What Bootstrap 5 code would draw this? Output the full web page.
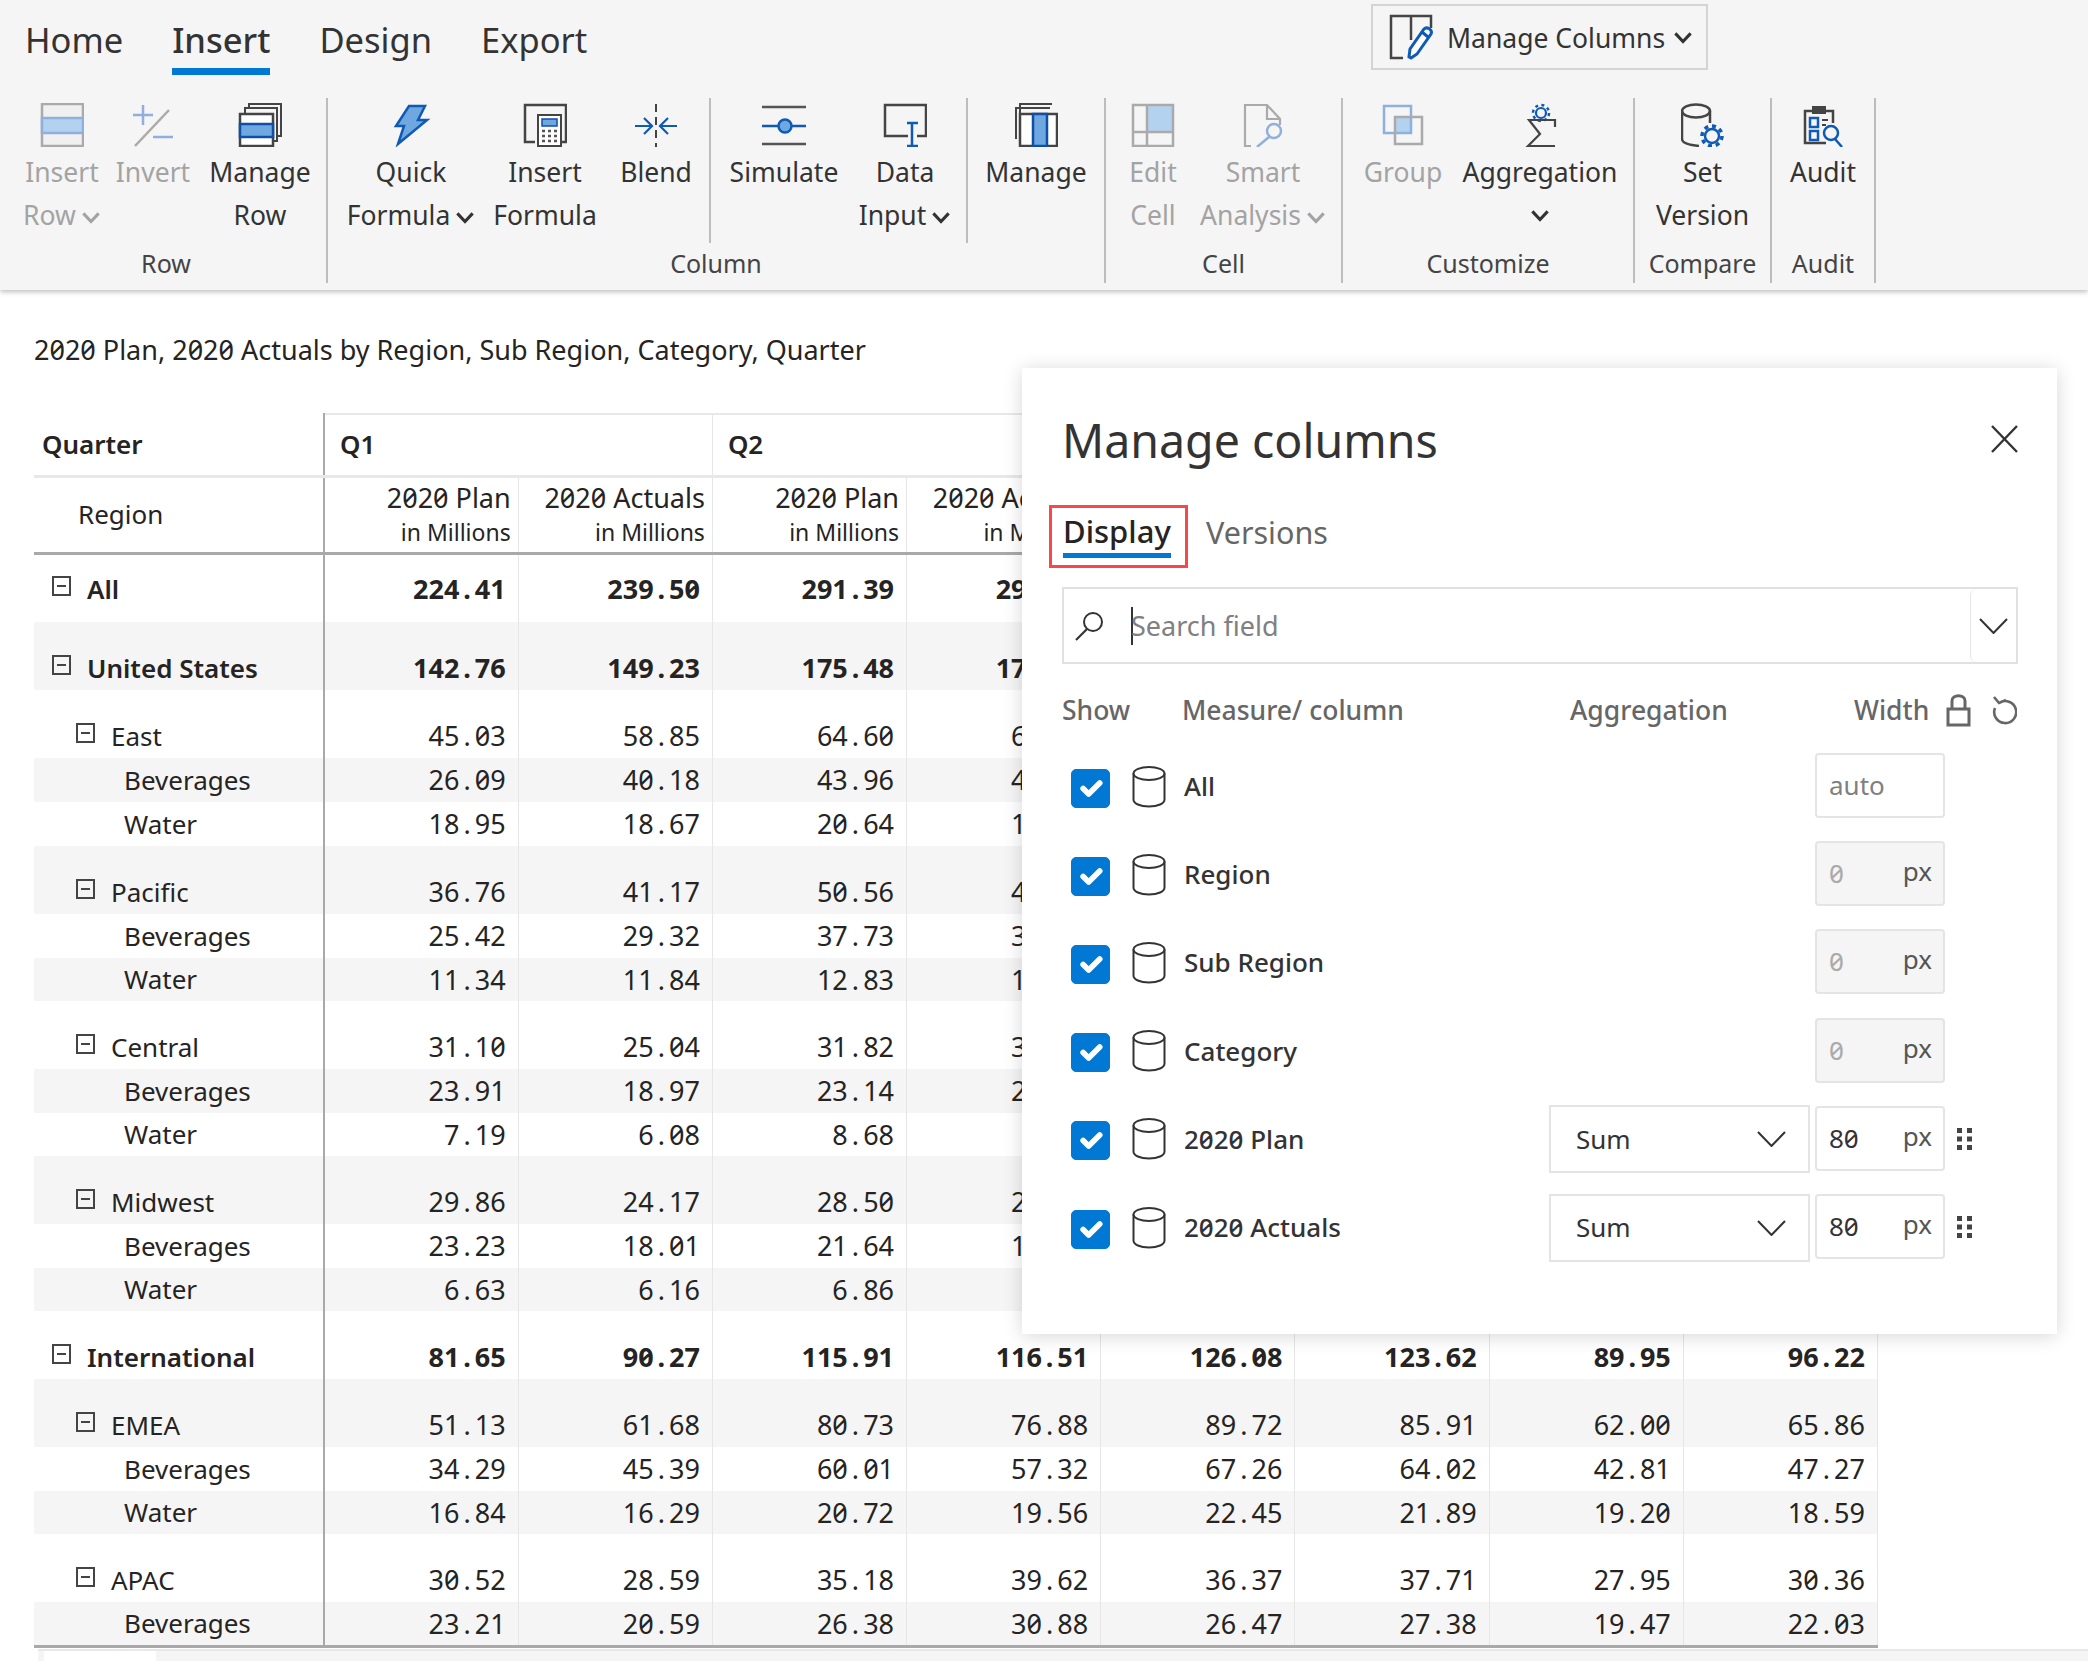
<!DOCTYPE html>
<html lang="en">
<head>
    <meta charset="UTF-8">
    <meta name="viewport" content="width=device-width, initial-scale=1.0">
    <title>Manage columns</title>
    <link href="https://cdn.jsdelivr.net/npm/bootstrap@5.3.0/dist/css/bootstrap.min.css" rel="stylesheet">
    <style>
        body {
            width: 2088px;
            height: 1661px;
            overflow: hidden;
            position: relative;
            background: #fff;
            color: #252423;
            font-family: "Noto Sans", sans-serif;
            font-size: 26px;
            font-feature-settings: "zero";
        }

        /* ribbon */
        .ribbon {
            height: 290px;
            background: #f5f5f5;
            box-shadow: 0 2px 5px rgba(0, 0, 0, .25);
        }

        .tab-row { height: 98px; }
        .tab-list { width: 1371px; padding-left: 25px; gap: 49px; }

        .tab-link {
            font-size: 34.5px;
            line-height: 48px;
            height: 75px;
            padding-top: 16px;
            color: #333;
        }

        .tab-on { font-weight: 500; border-bottom: 7px solid #0078d4; }

        .manage-btn {
            width: 337px;
            height: 66px;
            margin-top: 4px;
            border: 2px solid #d4d4d4;
            padding-left: 16px;
            font-size: 26.5px;
            color: #333;
        }

        .manage-btn span { padding-top: 3px; }
        .manage-btn svg.big { width: 46px; height: 46px; margin-right: 12px; }

        .rb-group { height: 185px; border-right: 2px solid #bdbdbd; flex: none; }
        .rb-sub { height: 145px; }
        .rb-sep { border-right: 2px solid #bdbdbd; }
        .rb-title { height: 40px; line-height: 40px; color: #444; text-align: center; font-size: 25px; }

        .rb-item {
            padding-top: 5px;
            line-height: 43.5px;
            font-size: 26.5px;
            white-space: nowrap;
            color: #333;
        }

        .rb-item.off { color: #a3a3a3; }
        .rb-icon { width: 44px; height: 44px; margin-bottom: 3.5px; flex: none; }
        .chev { width: 20px; height: 13px; margin-left: 5px; }
        .chev-line { height: 43.5px; }

        .g-row { width: 328px; }
        .g-row .rb-sub { padding-left: 20px; }
        .g-row .rb-title { padding-left: 6px; }
        .g-col { width: 778px; }
        .g-cell { width: 237px; }
        .g-cust { width: 292px; }
        .g-comp { width: 137px; }
        .g-audit { width: 104px; }

        .sub-a { width: 383px; padding-left: 23px; flex: none; }
        .sub-b { width: 257px; padding-left: 13px; flex: none; }
        .sub-c { width: 136px; flex: none; }

        .w84 { width: 84px; }
        .w98 { width: 98px; }
        .w116 { width: 116px; }
        .w120 { width: 120px; }
        .w148 { width: 148px; }
        .w74 { width: 74px; }
        .w122 { width: 122px; }
        .w94 { width: 94px; }
        .w126 { width: 126px; }
        .w154 { width: 154px; }
        .wfull { width: 100%; }

        /* report */
        .report-title { padding: 40px 0 0 34px; line-height: 40px; height: 123px; font-size: 27px; }

        .grid-wrap { margin-left: 34px; width: 1844px; }

        .report-grid { table-layout: fixed; width: 1844px; border-collapse: collapse; margin: 0; }
        .report-grid td, .report-grid th { padding: 0; border: 0; font-weight: 400; }
        .report-grid th.first { width: 290px; }
        .report-grid td:first-child, .report-grid th.first { border-right: 2px solid #a9a9a9; }
        .report-grid td { border-right: 1px solid #e6e6e6; vertical-align: bottom; line-height: 44px; }
        .report-grid tr.alt td { background: #f5f5f5; }
        .report-grid tr.bold td { font-weight: 600; }
        .report-grid tr.bold td.num { font-weight: 700; }

        .head-q th { height: 62px; border-top: 2px solid #e8e8e8 !important; border-bottom: 3px solid #e8e8e8 !important; font-weight: 600 !important; vertical-align: middle; }
        .head-q th.first { border-top: 0 !important; padding-left: 8px; }
        .head-q th.q { padding-left: 15px; border-right: 1px solid #e6e6e6; }
        .head-m th { height: 77px; border-bottom: 3px solid #a9a9a9 !important; vertical-align: middle; }
        .head-m th.first { padding-left: 44px; }
        .head-m th.m { text-align: right; padding-right: 7px; line-height: 34px; font-size: 27px; border-right: 1px solid #e6e6e6; }
        .head-m .sub-line { font-size: 23px; display: block; }

        .report-grid .h69 td { height: 69px; padding-bottom: 11px; }
        .report-grid .h68 td { height: 68px; }
        .report-grid .h44 td { height: 44px; }
        .report-grid .h43 td { height: 43px; line-height: 43px; }

        .num { text-align: right; padding-right: 12px !important; font-size: 27px; }
        .num-dot { display: inline-block; width: 15.4px; text-align: center; }
        .lv0 { padding-left: 18px !important; }
        .lv1 { padding-left: 42px !important; }
        .lv2 { padding-left: 90px !important; }

        .tree-box {
            display: inline-block;
            width: 19px;
            height: 20px;
            border: 2px solid #444;
            margin-right: 16px;
            position: relative;
            top: -3px;
            flex: none;
        }

        .tree-box::after {
            content: "";
            position: absolute;
            left: 3px;
            right: 3px;
            top: 7px;
            height: 2px;
            background: #444;
        }

        .grid-end { border-bottom: 3px solid #a9a9a9; }

        .scroll-bar {
            margin: 1px 0 0 38px;
            height: 14px;
            background: #f5f5f5;
            border-top: 2px solid #e8e8e8;
        }

        .scroll-thumb { width: 112px; height: 12px; margin-left: 6px; background: #fff; }

        /* panel */
        .side-panel {
            position: absolute;
            left: 1022px;
            top: 368px;
            width: 1035px;
            height: 966px;
            background: #fff;
            padding: 42px 39px 0 40px;
            box-shadow: 0 2px 18px rgba(0, 0, 0, .16);
        }

        .panel-title { font-size: 46.5px; line-height: 60px; color: #333; }
        .panel-x { width: 27px; height: 28px; margin-top: 15px; }

        .panel-tabs { margin: 35px 0 0 -13px; height: 63px; }
        .tab-box { width: 139px; height: 63px; border: 3px solid #f44a4f; padding-left: 11px; }

        .tab-name {
            font-size: 31px;
            font-weight: 500;
            line-height: 44px;
            height: 50px;
            padding-top: 1px;
            width: 108px;
            border-bottom: 5px solid #0078d4;
        }

        .tab-other { font-size: 30.5px; line-height: 44px; margin: -9px 0 0 18px; color: #666; }

        .search-box {
            margin-top: 19px;
            height: 77px;
            border: 2px solid #e1e1e1;
            border-radius: 0;
            padding: 0;
            font-size: 27px;
        }

        .search-glass { width: 30px; height: 30px; margin: 0 27px 0 10px; flex: none; }
        .search-caret { width: 2px; height: 38px; background: #333; flex: none; }
        .search-text { color: #808080; line-height: 38px; margin-left: -2px; }
        .search-drop { width: 46px; border-left: 1px solid #e6e6e6; border-radius: 6px; flex: none; }
        .chev-thin { width: 29px; height: 16px; flex: none; }

        .col-head { height: 40px; margin: 26px 0 14px; color: #666; font-weight: 500; line-height: 40px; font-size: 26.5px; }
        .ch-show { width: 120px; }
        .ch-measure { width: 388px; }
        .ch-agg { width: 284px; }
        .head-lock { width: 25px; height: 34px; margin: 0 20px 0 17px; }
        .head-undo { width: 26px; height: 30px; }

        .col-row { height: 88.2px; }

        .side-panel .form-check-input.col-check {
            width: 39px;
            height: 39px;
            margin: 0 22px 0 9px;
            background-color: #0078d4;
            border-color: #0078d4;
            border-radius: 5px;
            flex: none;
        }

        .col-cyl { width: 34px; height: 43px; margin: -4px 18px 0 0; flex: none; }
        .col-name { flex: 1 1 auto; color: #333; font-weight: 500; margin-top: -3px; }
        .agg-slot { width: 261px; margin: -3px 5px 0 0; flex: none; }

        .agg-select {
            height: 68px;
            border: 2px solid #e4e4e4;
            border-radius: 0;
            padding: 0 22px 0 25px;
            color: #333;
            font-size: 26px;
        }

        .width-box {
            width: 130px;
            height: 65px;
            flex: none;
            margin-top: -5px;
            border: 2px solid #e4e4e4;
            border-radius: 4px;
            padding: 0 11px 0 12px;
            color: #333;
            font-size: 26px;
        }

        .width-box.off { background: #f5f5f5; }
        .width-box.off .val { color: #aaa; }
        .width-box.auto { color: #808080; }
        .unit { color: #555; margin-top: -4px; }
        .grip { width: 15px; height: 22px; margin: -4px 46px 0 12px; flex: none; }
    </style>
</head>
<body>
<!-- Ribbon -->
<header class="ribbon">
    <div class="tab-row d-flex">
        <div class="tab-list d-flex">
            <div class="tab-link">Home</div>
            <div class="tab-link tab-on">Insert</div>
            <div class="tab-link">Design</div>
            <div class="tab-link">Export</div>
        </div>
        <div class="manage-btn d-flex align-items-center">
            <svg class="big" viewBox="0 0 46 46" fill="none">
                <path d="M14 44H2V2H42V14M22 2V26" stroke="#444" stroke-width="2.5"/>
                <path d="M22 44l-2-1 1-8L35 15c3-3 9 1 7 5L28 40z" stroke="#0f5ab5" stroke-width="3" fill="#fff"/>
                <path d="M33 18l6 5" stroke="#0f5ab5" stroke-width="3"/>
            </svg>
            <span>Manage Columns</span>
            <svg class="chev ms-2" viewBox="0 0 17 11" fill="none"><path d="M2 2l6.5 7L15 2" stroke="#333" stroke-width="2.6"/></svg>
        </div>
    </div>
    <div class="d-flex">
        <div class="rb-group g-row">
            <div class="rb-sub d-flex">
                <div class="rb-item off w84 d-flex flex-column align-items-center">
                    <svg class="rb-icon" viewBox="0 0 44 44" fill="none">
                        <rect x="2" y="1" width="41" height="42" stroke="#aaa" stroke-width="2.5" fill="#f0f0f0"/>
                        <rect x="2" y="15" width="41" height="15" fill="#b3d2f0" stroke="#8fb0dc" stroke-width="2.5"/>
                    </svg>
                    <span>Insert</span>
                    <span>Row<svg class="chev" viewBox="0 0 17 11" fill="none"><path d="M2 2l6.5 7L15 2" stroke="#a3a3a3" stroke-width="2.6"/></svg></span>
                </div>
                <div class="rb-item off w98 d-flex flex-column align-items-center">
                    <svg class="rb-icon" viewBox="0 0 44 44" fill="none">
                        <path d="M12 2V22M2 12H22M22 34H42" stroke="#8fb0dc" stroke-width="2.5"/>
                        <path d="M38 7L4 43" stroke="#aaa" stroke-width="2.5"/>
                    </svg>
                    <span>Invert</span>
                </div>
                <div class="rb-item w116 d-flex flex-column align-items-center">
                    <svg class="rb-icon" viewBox="0 0 44 44" fill="none">
                        <path d="M7 10V5H39V38H35M11 5V1H43V33H39" stroke="#444" stroke-width="2"/>
                        <rect x="2" y="11" width="33" height="32" stroke="#444" stroke-width="2.5" fill="#fff"/>
                        <rect x="2" y="21" width="33" height="13" fill="#6fa8e0" stroke="#0f4fa8" stroke-width="2.5"/>
                    </svg>
                    <span>Manage</span>
                    <span>Row</span>
                </div>
            </div>
            <div class="rb-title">Row</div>
        </div>
        <div class="rb-group g-col">
            <div class="rb-sub d-flex">
                <div class="sub-a rb-sep d-flex">
                    <div class="rb-item w120 d-flex flex-column align-items-center">
                        <svg class="rb-icon" viewBox="0 0 44 44" fill="none">
                            <path d="M20 3H36L29 17H38L9 41L15 23H7Z" fill="#6fa8e0" stroke="#0f5ab5" stroke-width="2.5"/>
                        </svg>
                        <span>Quick</span>
                        <span>Formula<svg class="chev" viewBox="0 0 17 11" fill="none"><path d="M2 2l6.5 7L15 2" stroke="#333" stroke-width="2.6"/></svg></span>
                    </div>
                    <div class="rb-item w148 d-flex flex-column align-items-center">
                        <svg class="rb-icon" viewBox="0 0 44 44" fill="none">
                            <path d="M12 39H2V2H43V39H38" stroke="#444" stroke-width="2.5"/>
                            <rect x="15" y="12" width="23" height="31" fill="#fff" stroke="#444" stroke-width="2"/>
                            <rect x="19" y="16" width="15" height="7" fill="#6fa8e0" stroke="#0f4fa8" stroke-width="1.5"/>
                            <path d="M19 28h15M19 33h15M19 38h15" stroke="#555" stroke-width="2.5" stroke-dasharray="3 3"/>
                        </svg>
                        <span>Insert</span>
                        <span>Formula</span>
                    </div>
                    <div class="rb-item w74 d-flex flex-column align-items-center">
                        <svg class="rb-icon" viewBox="0 0 44 44" fill="none">
                            <path d="M22 1V44" stroke="#444" stroke-width="2" stroke-dasharray="8 5"/>
                            <path d="M1 23H17M10 15l8 8-8 8M43 23H27M34 15l-8 8 8 8" stroke="#0f5ab5" stroke-width="2.2"/>
                        </svg>
                        <span>Blend</span>
                    </div>
                </div>
                <div class="sub-b rb-sep d-flex">
                    <div class="rb-item w120 d-flex flex-column align-items-center">
                        <svg class="rb-icon" viewBox="0 0 44 44" fill="none">
                            <path d="M0 4H44M0 41H44" stroke="#555" stroke-width="2.5"/>
                            <path d="M0 23H44" stroke="#0f5ab5" stroke-width="2.5"/>
                            <circle cx="23" cy="23" r="6.5" fill="#6fa8e0" stroke="#0f5ab5" stroke-width="2.5"/>
                        </svg>
                        <span>Simulate</span>
                    </div>
                    <div class="rb-item w122 d-flex flex-column align-items-center">
                        <svg class="rb-icon" viewBox="0 0 44 44" fill="none">
                            <path d="M25 33H2V2H43V33H34" stroke="#444" stroke-width="2.5"/>
                            <path d="M29 20V43M24 20H35M24 43H35" stroke="#0f5ab5" stroke-width="2.5"/>
                        </svg>
                        <span>Data</span>
                        <span>Input<svg class="chev" viewBox="0 0 17 11" fill="none"><path d="M2 2l6.5 7L15 2" stroke="#333" stroke-width="2.6"/></svg></span>
                    </div>
                </div>
                <div class="sub-c">
                    <div class="rb-item wfull d-flex flex-column align-items-center">
                        <svg class="rb-icon" viewBox="0 0 44 44" fill="none">
                            <path d="M2 36V5H36M6 36V1H38" stroke="#444" stroke-width="2"/>
                            <rect x="6" y="11" width="37" height="32" stroke="#444" stroke-width="2.5" fill="#fff"/>
                            <rect x="19" y="11" width="14" height="32" fill="#6fa8e0" stroke="#0f4fa8" stroke-width="2.5"/>
                        </svg>
                        <span>Manage</span>
                    </div>
                </div>
            </div>
            <div class="rb-title">Column</div>
        </div>
        <div class="rb-group g-cell">
            <div class="rb-sub d-flex">
                <div class="rb-item off w94 d-flex flex-column align-items-center">
                    <svg class="rb-icon" viewBox="0 0 44 44" fill="none">
                        <rect x="16" y="2" width="26" height="27" fill="#b3d2f0"/>
                        <path d="M2 2H42V43H2ZM16 2V43M2 29H42" stroke="#aaa" stroke-width="2.5"/>
                    </svg>
                    <span>Edit</span>
                    <span>Cell</span>
                </div>
                <div class="rb-item off w126 d-flex flex-column align-items-center">
                    <svg class="rb-icon" viewBox="0 0 44 44" fill="none">
                        <path d="M10 43H4V2H26L39 16V22M26 2V16H39" stroke="#aaa" stroke-width="2.2"/>
                        <circle cx="33" cy="28" r="7" stroke="#8fb0dc" stroke-width="2.5"/>
                        <path d="M28 34L16 44" stroke="#8fb0dc" stroke-width="2.5"/>
                    </svg>
                    <span>Smart</span>
                    <span>Analysis<svg class="chev" viewBox="0 0 17 11" fill="none"><path d="M2 2l6.5 7L15 2" stroke="#a3a3a3" stroke-width="2.6"/></svg></span>
                </div>
            </div>
            <div class="rb-title">Cell</div>
        </div>
        <div class="rb-group g-cust">
            <div class="rb-sub d-flex">
                <div class="rb-item off w120 d-flex flex-column align-items-center">
                    <svg class="rb-icon" viewBox="0 0 44 44" fill="none">
                        <rect x="14" y="14" width="16" height="15" fill="#b3d2f0"/>
                        <rect x="3" y="3" width="27" height="27" stroke="#8fb0dc" stroke-width="2.5"/>
                        <rect x="14" y="14" width="27" height="27" stroke="#aaa" stroke-width="2.5"/>
                    </svg>
                    <span>Group</span>
                </div>
                <div class="rb-item w154 d-flex flex-column align-items-center">
                    <svg class="rb-icon" viewBox="0 0 44 44" fill="none">
                        <circle cx="23" cy="10" r="5" stroke="#0f5ab5" stroke-width="2.2"/>
                        <circle cx="23" cy="10" r="8" stroke="#0f5ab5" stroke-width="2.5" stroke-dasharray="3 3.3"/>
                        <path d="M37 24V17H11L22 31L10 43H37" stroke="#444" stroke-width="2.2"/>
                    </svg>
                    <span>Aggregation</span>
                    <span class="chev-line d-flex align-items-center"><svg class="chev m-0" viewBox="0 0 17 11" fill="none"><path d="M2 2l6.5 7L15 2" stroke="#333" stroke-width="2.6"/></svg></span>
                </div>
            </div>
            <div class="rb-title">Customize</div>
        </div>
        <div class="rb-group g-comp">
            <div class="rb-sub">
                <div class="rb-item wfull d-flex flex-column align-items-center">
                    <svg class="rb-icon" viewBox="0 0 44 44" fill="none">
                        <ellipse cx="15" cy="8" rx="14" ry="6.5" stroke="#444" stroke-width="2.5"/>
                        <path d="M1 8V36C1 40 8 42 18 43M29 8V20" stroke="#444" stroke-width="2.5"/>
                        <circle cx="31" cy="33" r="7" stroke="#0f5ab5" stroke-width="2.5" fill="#f5f5f5"/>
                        <circle cx="31" cy="33" r="10" stroke="#0f5ab5" stroke-width="3.5" stroke-dasharray="4 3.8"/>
                    </svg>
                    <span>Set</span>
                    <span>Version</span>
                </div>
            </div>
            <div class="rb-title">Compare</div>
        </div>
        <div class="rb-group g-audit">
            <div class="rb-sub">
                <div class="rb-item wfull d-flex flex-column align-items-center">
                    <svg class="rb-icon" viewBox="0 0 44 44" fill="none">
                        <path d="M25 40H4V8H32V20" stroke="#444" stroke-width="2.5"/>
                        <rect x="11" y="3" width="14" height="8" fill="#444"/>
                        <rect x="9" y="15" width="8" height="9" stroke="#0f5ab5" stroke-width="2.5"/>
                        <rect x="9" y="28" width="8" height="9" stroke="#0f5ab5" stroke-width="2.5"/>
                        <path d="M21 17h6M21 22h4" stroke="#444" stroke-width="2.2"/>
                        <circle cx="30" cy="30" r="7" stroke="#0f5ab5" stroke-width="2.5" fill="#f5f5f5"/>
                        <path d="M34 36l7 8" stroke="#0f5ab5" stroke-width="2.5"/>
                    </svg>
                    <span>Audit</span>
                </div>
            </div>
            <div class="rb-title">Audit</div>
        </div>
    </div>
</header>

<!-- Report -->
<div class="report-title">2020 Plan, 2020 Actuals by Region, Sub Region, Category, Quarter</div>
<div class="grid-wrap">
    <table class="report-grid">
        <thead>
        <tr class="head-q">
            <th class="first">Quarter</th>
            <th class="q" colspan="2">Q1</th>
            <th class="q" colspan="2">Q2</th>
            <th class="q" colspan="2">Q3</th>
            <th class="q" colspan="2">Q4</th>
        </tr>
        <tr class="head-m" id="measureHead"></tr>
        </thead>
        <tbody id="gridBody"></tbody>
    </table>
    <div class="grid-end"></div>
</div>
<div class="scroll-bar"><div class="scroll-thumb"></div></div>

<!-- Manage columns panel -->
<aside class="side-panel">
    <div class="d-flex justify-content-between">
        <div class="panel-title">Manage columns</div>
        <svg class="panel-x" viewBox="0 0 27 28" fill="none"><path d="M1 1L26 27M26 1L1 27" stroke="#333" stroke-width="2.4"/></svg>
    </div>
    <div class="panel-tabs d-flex">
        <div class="tab-box"><div class="tab-name">Display</div></div>
        <div class="tab-other d-flex align-items-center">Versions</div>
    </div>
    <div class="search-box form-control d-flex align-items-center">
        <svg class="search-glass" viewBox="0 0 30 30" fill="none">
            <circle cx="19" cy="11" r="9" stroke="#333" stroke-width="2"/>
            <path d="M13 18L2 29" stroke="#333" stroke-width="2.2"/>
        </svg>
        <span class="search-caret"></span>
        <span class="search-text flex-grow-1">Search field</span>
        <div class="search-drop h-100 d-flex align-items-center justify-content-center">
            <svg class="chev-thin" viewBox="0 0 29 16" fill="none"><path d="M1 1L14.5 15L28 1" stroke="#333" stroke-width="2"/></svg>
        </div>
    </div>
    <div class="col-head d-flex">
        <div class="ch-show">Show</div>
        <div class="ch-measure">Measure/ column</div>
        <div class="ch-agg">Aggregation</div>
        <div class="d-flex align-items-center">
            <span>Width</span>
            <svg class="head-lock" viewBox="0 0 25 34" fill="none"><path d="M6 16V8C6 1 19 1 19 8V16M2 16H23V32H2Z" stroke="#666" stroke-width="3"/></svg>
            <svg class="head-undo" viewBox="0 0 26 30" fill="none"><path d="M8 8A11 11 0 1 1 4 13M3 2L8 8L15 5" stroke="#666" stroke-width="2.6"/></svg>
        </div>
    </div>
    <div id="columnRows"></div>
</aside>

<script src="https://cdn.jsdelivr.net/npm/bootstrap@5.3.0/dist/js/bootstrap.bundle.min.js"></script>
<script>
    // [tree level, label, row height class, shaded, bold, values]
    const gridRows = [
        [0, "All", "h69", 0, 1, ["224.41", "239.50", "291.39", "295.14"]],
        [0, "United States", "h68", 1, 1, ["142.76", "149.23", "175.48", "178.63"]],
        [1, "East", "h68", 0, 0, ["45.03", "58.85", "64.60", "65.21"]],
        [2, "Beverages", "h44", 1, 0, ["26.09", "40.18", "43.96", "45.37"]],
        [2, "Water", "h44", 0, 0, ["18.95", "18.67", "20.64", "19.84"]],
        [1, "Pacific", "h68", 1, 0, ["36.76", "41.17", "50.56", "47.92"]],
        [2, "Beverages", "h44", 0, 0, ["25.42", "29.32", "37.73", "34.51"]],
        [2, "Water", "h43", 1, 0, ["11.34", "11.84", "12.83", "13.41"]],
        [1, "Central", "h68", 0, 0, ["31.10", "25.04", "31.82", "33.05"]],
        [2, "Beverages", "h44", 1, 0, ["23.91", "18.97", "23.14", "25.18"]],
        [2, "Water", "h43", 0, 0, ["7.19", "6.08", "8.68", "7.87"]],
        [1, "Midwest", "h68", 1, 0, ["29.86", "24.17", "28.50", "26.44"]],
        [2, "Beverages", "h44", 0, 0, ["23.23", "18.01", "21.64", "19.32"]],
        [2, "Water", "h43", 1, 0, ["6.63", "6.16", "6.86", "7.12"]],
        [0, "International", "h68", 0, 1, ["81.65", "90.27", "115.91", "116.51", "126.08", "123.62", "89.95", "96.22"]],
        [1, "EMEA", "h68", 1, 0, ["51.13", "61.68", "80.73", "76.88", "89.72", "85.91", "62.00", "65.86"]],
        [2, "Beverages", "h44", 0, 0, ["34.29", "45.39", "60.01", "57.32", "67.26", "64.02", "42.81", "47.27"]],
        [2, "Water", "h43", 1, 0, ["16.84", "16.29", "20.72", "19.56", "22.45", "21.89", "19.20", "18.59"]],
        [1, "APAC", "h68", 0, 0, ["30.52", "28.59", "35.18", "39.62", "36.37", "37.71", "27.95", "30.36"]],
        [2, "Beverages", "h43", 1, 0, ["23.21", "20.59", "26.38", "30.88", "26.47", "27.38", "19.47", "22.03"]]
    ];

    let headHtml = '<th class="first">Region</th>';
    for (let i = 0; i < 8; i++) {
        const name = i % 2 ? "2020 Actuals" : "2020 Plan";
        headHtml += `<th class="m">${name}<span class="sub-line">in Millions</span></th>`;
    }
    document.getElementById("measureHead").innerHTML = headHtml;

    // the period sits in a digit-wide cell, the grid numbers are monospaced
    function formatNum(v) {
        return v ? v.replace(".", '<span class="num-dot">.</span>') : "";
    }

    document.getElementById("gridBody").innerHTML = gridRows.map(r => {
        const [level, label, height, alt, bold, values] = r;
        const box = level < 2 ? '<span class="tree-box"></span>' : "";
        let cells = "";
        for (let i = 0; i < 8; i++) cells += `<td class="num">${formatNum(values[i])}</td>`;
        return `<tr class="${height}${alt ? " alt" : ""}${bold ? " bold" : ""}">
            <td class="lv${level}"><div class="d-flex align-items-center">${box}<span>${label}</span></div></td>${cells}</tr>`;
    }).join("");

    const cylinder = `<svg class="col-cyl" viewBox="0 0 34 42" fill="none"><ellipse cx="17" cy="8" rx="15.5" ry="6.5" stroke="#333" stroke-width="2"/><path d="M1.5 8V34C1.5 38 8 41 17 41S32.5 38 32.5 34V8" stroke="#333" stroke-width="2"/></svg>`;
    const chevron = `<svg class="chev-thin" viewBox="0 0 29 16" fill="none"><path d="M1 1L14.5 15L28 1" stroke="#333" stroke-width="2"/></svg>`;
    const grip = `<svg class="grip" viewBox="0 0 15 22" fill="#444"><rect width="5" height="5" x="0" y="0"/><rect width="5" height="5" x="10" y="0"/><rect width="5" height="5" x="0" y="8.5"/><rect width="5" height="5" x="10" y="8.5"/><rect width="5" height="5" x="0" y="17"/><rect width="5" height="5" x="10" y="17"/></svg>`;

    // name, width text, has aggregation
    const columnRows = [
        ["All", "auto", 0],
        ["Region", "0", 0],
        ["Sub Region", "0", 0],
        ["Category", "0", 0],
        ["2020 Plan", "80", 1],
        ["2020 Actuals", "80", 1]
    ];

    document.getElementById("columnRows").innerHTML = columnRows.map(c => {
        const [name, width, agg] = c;
        const select = agg ? `<div class="agg-select form-control d-flex align-items-center justify-content-between"><span>Sum</span>${chevron}</div>` : "";
        const widthBox = width === "auto"
            ? `<div class="width-box auto form-control d-flex align-items-center">auto</div>`
            : `<div class="width-box ${agg ? "" : "off"} form-control d-flex align-items-center justify-content-between"><span class="val">${width}</span><span class="unit">px</span></div>`;
        return `<div class="col-row d-flex align-items-center">
            <input class="form-check-input col-check" type="checkbox" checked>
            ${cylinder}
            <div class="col-name">${name}</div>
            <div class="agg-slot">${select}</div>
            ${widthBox}
            ${agg ? grip : '<span class="grip"></span>'}
        </div>`;
    }).join("");
</script>
</body>
</html>
